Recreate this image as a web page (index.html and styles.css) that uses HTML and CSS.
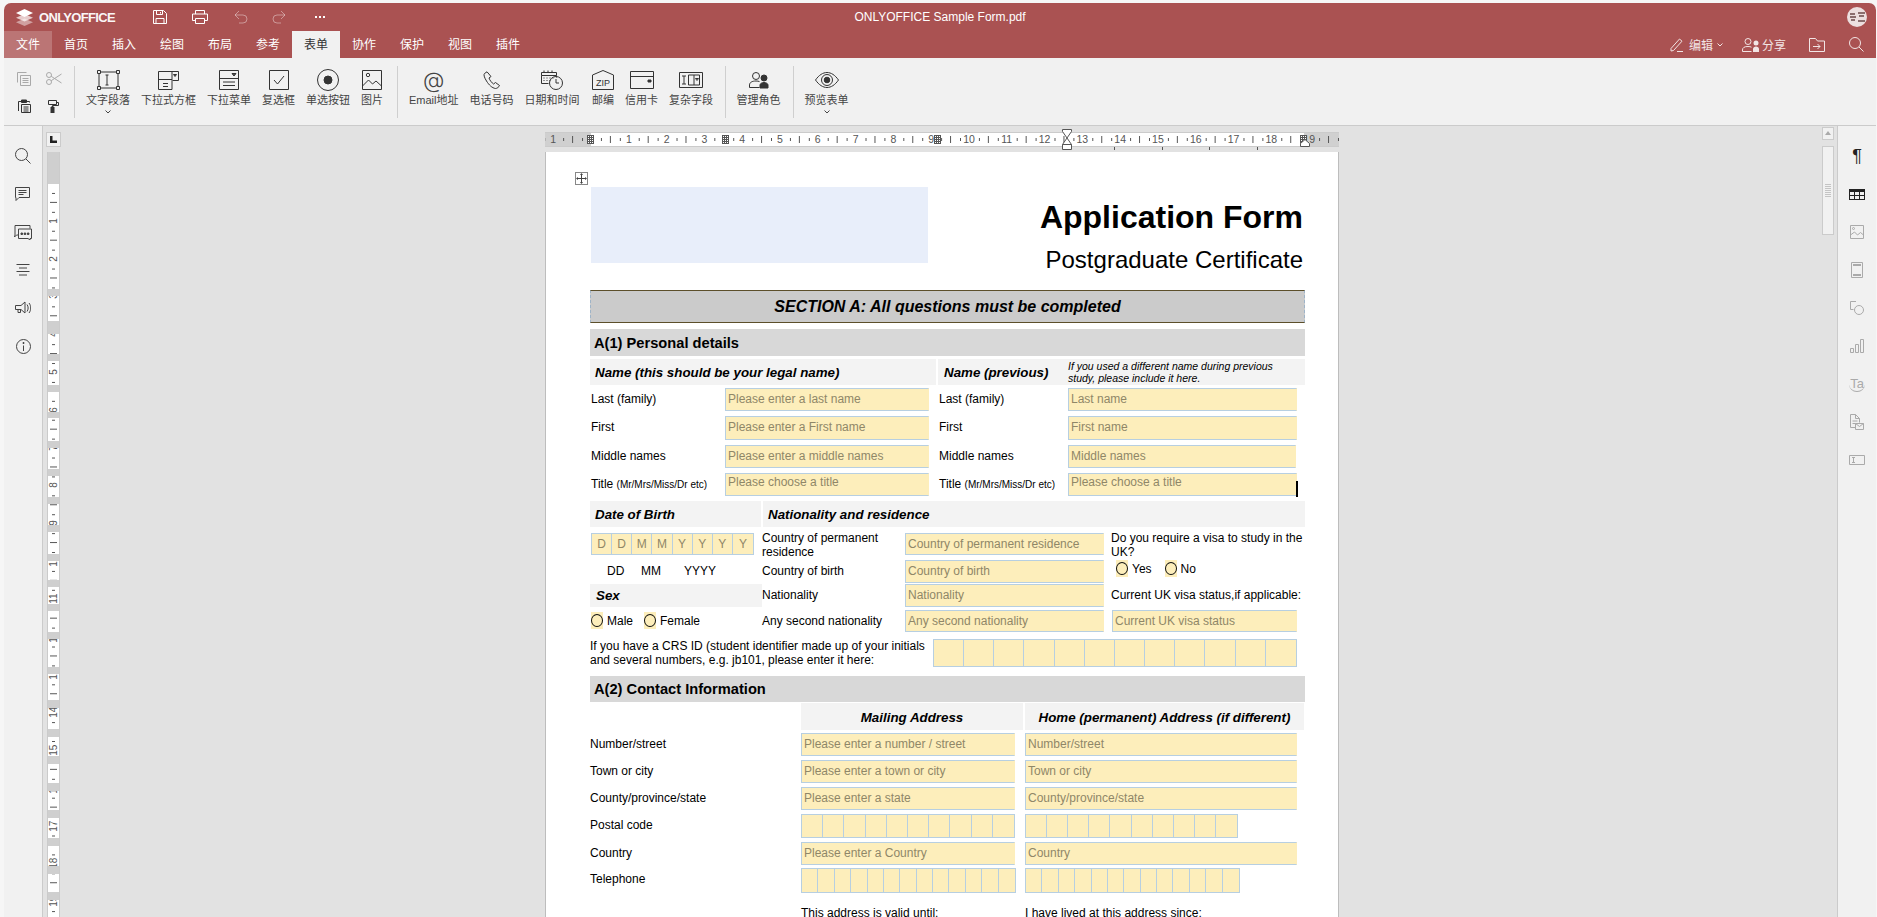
FILE: index.html
```html
<!DOCTYPE html>
<html lang="zh">
<head>
<meta charset="utf-8">
<title>ONLYOFFICE Sample Form.pdf</title>
<link rel="stylesheet" href="styles.css">
</head>
<body>
<div class="app">
  <header class="head">
    <div class="titlebar">
      <div class="tb-left">
        <svg class="logo" viewBox="0 0 17 17" width="17" height="17"><path d="M8.5 9.5 0 13.2l8.5 3.8 8.5-3.8z" fill="#fff" opacity=".45"/><path d="M8.5 5 0 8.7l8.5 3.8L17 8.7z" fill="#fff" opacity=".7"/><path d="M8.5 0 0 4l8.5 4L17 4z" fill="#fff"/></svg>
        <span class="brand">ONLYOFFICE</span>
        <svg class="tb-save" viewBox="0 0 14 14" width="14" height="14"><path class="w" d="M.5.500h10l3 3v10H.5zM3.500.5v4h6v-4M3 13.500v-5h8v5M7.500 2v1.500"/></svg>
        <svg class="tb-print" viewBox="0 0 16 14" width="16" height="14"><path class="w" d="M3.500 4V.5h9V4M3.500 10.500H.5V4h15v6.500h-3M3.500 8.500h9v5h-9z"/></svg>
        <svg class="tb-undo" viewBox="0 0 14 14" width="14" height="14"><path class="w dim" d="M5 1 1 5l4 4M1 5h8a4 4 0 0 1 0 8H5"/></svg>
        <svg class="tb-redo" viewBox="0 0 14 14" width="14" height="14"><path class="w dim" d="m9 1 4 4-4 4M13 5H5a4 4 0 0 0 0 8h4"/></svg>
        <span class="tb-dots"><i></i><i></i><i></i></span>
      </div>
      <div class="doc-title">ONLYOFFICE Sample Form.pdf</div>
      <div class="tb-right">
        <svg class="avatar" viewBox="0 0 20 20" width="20" height="20"><circle cx="10" cy="10" r="10" fill="#ecdfdf"/><path d="M3 7h5M3 10h6M4 13h4M11 6h7M11 14h7M12 9h5" stroke="#6b4a4a" stroke-width="1.300" fill="none"/></svg>
      </div>
    </div>
    <div class="tabbar">
      <span class="tab tab-file">文件</span>
      <span class="tab">首页</span>
      <span class="tab">插入</span>
      <span class="tab">绘图</span>
      <span class="tab">布局</span>
      <span class="tab">参考</span>
      <span class="tab tab-on">表单</span>
      <span class="tab">协作</span>
      <span class="tab">保护</span>
      <span class="tab">视图</span>
      <span class="tab">插件</span>
      <div class="hdr-tools">
        <svg class="ht-pencil" viewBox="0 0 14 14" width="14" height="14"><path class="w" d="M1 10.500 9.500 1 12 3.200 3.500 12.500 1 13zM7 13.500h6"/></svg>
        <span class="ht-label">编辑</span>
        <svg class="ht-chev" viewBox="0 0 6 4" width="6" height="4"><path class="w" d="m.5.500 2.500 2.500L5.500.500"/></svg>
        <svg class="ht-share" viewBox="0 0 18 14" width="18" height="14"><circle class="w" cx="6" cy="3.500" r="3"/><path class="w" d="M.5 13.500v-1.500c0-2.500 2-3.500 5.500-3.500 1.500 0 2.500.2 3.500.7M.5 13.500h9"/><circle cx="14" cy="5" r="2.500" fill="#fff"/><path d="M11 14v-3c0-1.500 1.500-2.500 3-2.500s3 1 3 2.500v3z" fill="#fff"/></svg>
        <span class="ht-label ht-tight">分享</span>
        <svg class="ht-file" viewBox="0 0 16 14" width="16" height="14"><path class="w" d="M.5.500h6l2 2.500h7v10.500H.5zM4 8.500h7M8.500 6l2.500 2.500L8.500 11"/></svg>
        <svg class="ht-search" viewBox="0 0 15 15" width="15" height="15"><circle class="w" cx="6" cy="6" r="5.500"/><path class="w" d="m10 10 4.500 4.500"/></svg>
      </div>
    </div>
  </header>

  <section class="toolbar">
    <div class="clip">
      <svg class="dim-ic" viewBox="0 0 14 14" width="14" height="14"><path d="M.5 10.500V.5h9M3.500 3.500h10v10h-10zM5.500 6.500h6M5.500 8.500h6M5.500 10.500h6"/></svg>
      <svg class="dim-ic" viewBox="0 0 16 13" width="16" height="13"><circle cx="3" cy="3" r="2.500"/><circle cx="3" cy="10" r="2.500"/><path d="M5.200 4.300 15.500 11M5.200 8.700 15.500 2"/></svg>
      <svg class="dark-ic" viewBox="0 0 14 14" width="14" height="14"><path d="M1.500 12V2.500h3M9.500 2.500h3v1M4.500 5.500h9v8h-9zM6.500 8h5M6.500 10h5M6.500 12h5"/><path d="M4.500 1h5v2.500h-5z" fill="#333"/></svg>
      <svg class="dark-ic" viewBox="0 0 14 14" width="14" height="14"><path d="M2.500 1.500h8v4h-8zM10.500 3.500h2v3h-6v2"/><path d="M5 8h3v6H5z" fill="#333"/></svg>
    </div>
    <span class="sep sep-a"></span>
    <div class="tools">
      <div class="tool"><svg class="tic" viewBox="0 0 23 20" width="23" height="20"><path d="M2 2h19v16H2zM8.500 5h3M10 5v10M8.500 15h3"/><path d="M.5.500h3v3h-3zM19.500.500h3v3h-3zM.5 16.500h3v3h-3zM19.500 16.500h3v3h-3z" fill="#f1f1f1"/></svg><span class="lbl">文字段落</span><svg class="more" viewBox="0 0 6 4" width="6" height="4"><path d="m.5.500 2.500 2.500L5.500.500"/></svg></div>
      <div class="tool"><svg class="tic" viewBox="0 0 21 20" width="21" height="20"><path d="M.5 19.500V1.500h20v9h-6M14 1.500v9M14 10.500v9H.5M.5 9.500h13.500M5 13.500h5M5 16.500h5"/><path d="m15.500 4.500 3 0-1.500 2z" fill="#555"/></svg><span class="lbl">下拉式方框</span></div>
      <div class="tool"><svg class="tic" viewBox="0 0 20 20" width="20" height="20"><path d="M.5.500h19v19H.5zM.5 8.500h19M4 12h12M4 15.500h12"/><path d="m13 3.500 4 0-2 2.500z" fill="#555"/></svg><span class="lbl">下拉菜单</span></div>
      <div class="tool"><svg class="tic" viewBox="0 0 20 20" width="20" height="20"><path d="M.5.500h19v19H.5zM5 10l3.500 4L15 6"/></svg><span class="lbl">复选框</span></div>
      <div class="tool"><svg class="tic" viewBox="0 0 22 22" width="22" height="22"><circle cx="11" cy="11" r="10.500"/><circle cx="11" cy="11" r="4" fill="#333"/></svg><span class="lbl">单选按钮</span></div>
      <div class="tool"><svg class="tic" viewBox="0 0 20 20" width="20" height="20"><path d="M.5.500h19v19H.5zM.5 16l6-6 4 4 3.500-3 5.500 5"/><circle cx="6" cy="5" r="1.700"/></svg><span class="lbl">图片</span></div>
    </div>
    <span class="sep sep-b"></span>
    <div class="tools">
      <div class="tool"><span class="at">@</span><span class="lbl">Email地址</span></div>
      <div class="tool"><svg class="tic" viewBox="0 0 18 18" width="18" height="18"><path d="M4 .8 1.500 2.500C.5 3.500 1 6 3.500 10s5.500 7 9 7.500c1.500 0 3.500-1.500 4-3l-4-3-2 1.500C9 12 6.500 9 6 7l2-1.500z"/></svg><span class="lbl">电话号码</span></div>
      <div class="tool tool-date"><svg class="tic" viewBox="0 0 22 20" width="22" height="20"><path d="M.5 2.500h15v3H.5zM.5 5.500v8h7M15.500 5.500v2M2.500 8h1M5.500 8h1M8.500 8h1M11.500 8h1M2.500 10.500h1M5.500 10.500h1M8.500 10.500h1M3 .5v2M7 .5v2M11 .5v2"/><circle cx="15" cy="13" r="6.500"/><path d="M15 9v4h3"/></svg><span class="lbl">日期和时间</span></div>
      <div class="tool"><svg class="tic" viewBox="0 0 22 20" width="22" height="20"><path d="M.5 5 11 .5 21.500 5v14.500H.5z"/><text class="ziptxt" x="11" y="15.500">ZIP</text></svg><span class="lbl">邮编</span></div>
      <div class="tool"><svg class="tic" viewBox="0 0 24 18" width="24" height="18"><path d="M.5.500h23v17H.5zM.5 5.500h23"/><path d="M18 9h3v2h-3z" fill="#333"/></svg><span class="lbl">信用卡</span></div>
      <div class="tool"><svg class="tic" viewBox="0 0 24 16" width="24" height="16"><path d="M.5.500h23v15H.5zM3 4h4M5 4v8M3 12h4M9.500 3h11v10h-11zM15 3v10M16.500 6.500h3l-1.500 2z"/></svg><span class="lbl">复杂字段</span></div>
    </div>
    <span class="sep sep-c"></span>
    <div class="tools">
      <div class="tool"><svg class="tic" viewBox="0 0 20 16" width="20" height="16"><circle cx="7" cy="4" r="3.500"/><path d="M.5 15.500V13c0-2.500 2.500-4 6.500-4 1.500 0 2.500.2 3.500.6M.5 15.500h10"/><circle cx="15" cy="6" r="3" fill="#333"/><path d="M11 16v-3c0-1.500 2-2.500 4-2.500s4 1 4 2.500v3z" fill="#333"/></svg><span class="lbl">管理角色</span></div>
    </div>
    <span class="sep sep-d"></span>
    <div class="tools">
      <div class="tool"><svg class="tic" viewBox="0 0 24 16" width="24" height="16"><path d="M.5 8C4 3 8 .5 12 .5S20 3 23.500 8C20 13 16 15.500 12 15.500S4 13 .5 8z"/><circle cx="12" cy="8" r="5.500"/><circle cx="12" cy="8" r="2.800" fill="#333"/></svg><span class="lbl">预览表单</span><svg class="more" viewBox="0 0 6 4" width="6" height="4"><path d="m.5.500 2.500 2.500L5.500.500"/></svg></div>
    </div>
  </section>

  <div class="workspace">
    <aside class="side side-left">
      <div class="side-item"><svg class="si" viewBox="0 0 16 16" width="16" height="16"><circle cx="6.500" cy="6.500" r="6"/><path d="m11 11 4.500 4.500"/></svg></div>
      <div class="side-item"><svg class="si" viewBox="0 0 16 14" width="16" height="14"><path d="M.5.500h14v10H4l-3 3v-3H.5zM3.500 3.500h8M3.500 5.500h8M3.500 7.500h5"/></svg></div>
      <div class="side-item"><svg class="si" viewBox="0 0 18 15" width="18" height="15"><path d="M1 10V.5h15v3M1 10l-.5 2 2-2H4M4.500 4h13v9.500h-1.500v1.500l-2-1.500H4.500z"/><path d="M7 8h1.500v1.500H7zM10.200 8h1.500v1.500h-1.500zM13.400 8h1.500v1.500h-1.500z" fill="#444"/></svg></div>
      <div class="side-item"><svg class="si" viewBox="0 0 14 12" width="14" height="12"><path d="M.5.500h13M3 4h8M.5 7.500h13M3 11h8"/></svg></div>
      <div class="side-item"><svg class="si" viewBox="0 0 16 14" width="16" height="14"><path d="M.5 4.500h5.500L10 1v11L6 8.500H.5zM3 8.500v3h2.500v-3M12 3.500c1.500 2 1.500 5 0 7M14 2c2.300 3 2.300 7 0 10"/></svg></div>
      <div class="side-item"><svg class="si" viewBox="0 0 15 15" width="15" height="15"><circle cx="7.500" cy="7.500" r="7"/><path d="M7.500 6.500V12"/><path d="M7 3.500h1v1H7z" fill="#444"/></svg></div>
    </aside>

    <main class="canvas">
      <div class="vcol">
        <div class="corner"><svg viewBox="0 0 7 7" width="7" height="7"><path d="M0 0h2.500v4.500H7V7H0z" fill="#222"/></svg></div>
        <div class="vruler">
          <div class="vnums">
            <span></span><span>1</span><span>2</span><span>3</span><span>4</span><span>5</span><span>6</span><span>7</span><span>8</span><span>9</span><span>10</span><span>11</span><span>12</span><span>13</span><span>14</span><span>15</span><span>16</span><span>17</span><span>18</span><span>19</span>
          </div>
        </div>
      </div>

      <div class="doc">
        <div class="hruler">
          <div class="hnums">
            <span class="g">1</span><span class="g"></span><span>1</span><span>2</span><span>3</span><span>4</span><span>5</span><span>6</span><span>7</span><span>8</span><span>9</span><span>10</span><span>11</span><span>12</span><span>13</span><span>14</span><span>15</span><span>16</span><span>17</span><span>18</span><span class="g">19</span>
          </div>
          <i class="colmark cm1"></i><i class="colmark cm2"></i><i class="colmark cm3"></i><i class="colmark cm4"></i>
          <svg class="hourglass" viewBox="0 0 10 21" width="10" height="21"><path d="M.5.500h9v2L5 9l4.500 6.500v5h-9v-5L5 9 .5 2.500zM.5 15.500h9" fill="#fff" stroke="#555"/></svg>
          <svg class="endmark" viewBox="0 0 10 8" width="10" height="8"><path d="M.5 7.500V4.500L5 .5l4.500 4v3z" fill="#fff" stroke="#555"/></svg>
          <i class="hmark hm1"></i><i class="hmark hm2"></i><i class="hmark hm3"></i><i class="hmark hm4"></i>
        </div>

        <article class="page">
          <span class="move"><svg viewBox="0 0 11 11" width="11" height="11"><path d="M5.500 1.500v8M1.500 5.500h8" fill="none" stroke="#444"/><path d="M5.500 0 7 2H4zM5.500 11 4 9h3zM0 5.500 2 4v3zM11 5.500 9 7V4z" fill="#444"/></svg></span>
          <div class="form">
            <div class="form-head">
              <div class="logo-box"></div>
              <div class="form-title">
                <h1>Application Form</h1>
                <h2>Postgraduate Certificate</h2>
              </div>
            </div>

            <div class="section-a">SECTION A: All questions must be completed</div>
            <div class="band band-a1">A(1) Personal details</div>

            <div class="name-head">
              <div class="nh nh-l"><b>Name (this should be your legal name)</b></div>
              <div class="nh nh-r"><b>Name (previous)</b><small>If you used a different name during previous study, please include it here.</small></div>
            </div>

            <div class="names">
              <span class="lab">Last (family)</span><div class="f">Please enter a last name</div><span></span><span class="lab">Last (family)</span><div class="f">Last name</div>
              <span class="lab">First</span><div class="f">Please enter a First name</div><span></span><span class="lab">First</span><div class="f">First name</div>
              <span class="lab">Middle names</span><div class="f">Please enter a middle names</div><span></span><span class="lab">Middle names</span><div class="f f-short">Middle names</div>
              <span class="lab">Title <small>(Mr/Mrs/Miss/Dr etc)</small></span><div class="f f-top">Please choose a title</div><span></span><span class="lab">Title <small>(Mr/Mrs/Miss/Dr etc)</small></span><div class="f f-top f-caret">Please choose a title</div>
            </div>

            <div class="dob-head">
              <div class="nh dh-l"><b>Date of Birth</b></div>
              <div class="nh dh-r"><b>Nationality and residence</b></div>
            </div>

            <div class="dob">
              <div class="cells cells-dob f-h22"><span>D</span><span>D</span><span>M</span><span>M</span><span>Y</span><span>Y</span><span>Y</span><span>Y</span></div>
              <span class="lab2">Country of permanent residence</span>
              <div class="f f-h22">Country of permanent residence</div>
              <span></span>
              <span class="lab2">Do you require a visa to study in the UK?</span>

              <div class="dmy"><span>DD</span><span>MM</span><span>YYYY</span></div>
              <span class="lab">Country of birth</span>
              <div class="f">Country of birth</div>
              <span></span>
              <div class="radios r-visa"><label class="radio"><i></i>Yes</label><label class="radio"><i></i>No</label></div>

              <div class="nh sex"><b>Sex</b></div>
              <span class="lab">Nationality</span>
              <div class="f">Nationality</div>
              <span></span>
              <span class="lab">Current UK visa status,if applicable:</span>

              <div class="radios r-sex"><label class="radio"><i></i>Male</label><label class="radio"><i></i>Female</label></div>
              <span class="lab">Any second nationality</span>
              <div class="f f-h22">Any second nationality</div>
              <span></span>
              <div class="f f-h22 f-visa">Current UK visa status</div>
            </div>

            <div class="crs">
              <p>If you have a CRS ID (student identifier made up of your initials and several numbers, e.g. jb101, please enter it here:</p>
              <div class="cells c12"><span></span><span></span><span></span><span></span><span></span><span></span><span></span><span></span><span></span><span></span><span></span><span></span></div>
            </div>

            <div class="band band-a2">A(2) Contact Information</div>

            <div class="contact">
              <span></span><div class="nh ch ch-l"><b>Mailing Address</b></div><div class="nh ch ch-r"><b>Home (permanent) Address (if different)</b></div>
              <span class="lab">Number/street</span><div class="f f-l">Please enter a number / street</div><div class="f f-r">Number/street</div>
              <span class="lab">Town or city</span><div class="f f-l">Please enter a town or city</div><div class="f f-r">Town or city</div>
              <span class="lab">County/province/state</span><div class="f f-l">Please enter a state</div><div class="f f-r">County/province/state</div>
              <span class="lab">Postal code</span>
              <div class="cells c10 f-l p-h"><span></span><span></span><span></span><span></span><span></span><span></span><span></span><span></span><span></span><span></span></div>
              <div class="cells c10 pr p-h"><span></span><span></span><span></span><span></span><span></span><span></span><span></span><span></span><span></span><span></span></div>
              <span class="lab">Country</span><div class="f f-l">Please enter a Country</div><div class="f f-r">Country</div>
              <span class="lab">Telephone</span>
              <div class="cells c13 tel"><span></span><span></span><span></span><span></span><span></span><span></span><span></span><span></span><span></span><span></span><span></span><span></span><span></span></div>
              <div class="cells c13 tel"><span></span><span></span><span></span><span></span><span></span><span></span><span></span><span></span><span></span><span></span><span></span><span></span><span></span></div>
              <span></span><span class="plain">This address is valid until:</span><span class="plain">I have lived at this address since:</span>
            </div>
          </div>
        </article>
      </div>

      <div class="vscroll">
        <div class="sc-up"></div>
        <div class="sc-thumb"><i></i></div>
      </div>
    </main>

    <aside class="side side-right">
      <div class="side-item"><span class="pilcrow">¶</span></div>
      <div class="side-item"><svg viewBox="0 0 16 11" width="16" height="11"><path d="M0 0h16v11H0z" fill="#222"/><path d="M1 3h4v3H1zM6 3h4v3H6zM11 3h4v3h-4zM1 7h4v3H1zM6 7h4v3H6zM11 7h4v3h-4z" fill="#f1f1f1"/></svg></div>
      <div class="side-item"><svg class="rs" viewBox="0 0 14 14" width="14" height="14"><path d="M.5.500h13v13H.5zM.5 10l4-3 3 3 3-2.500 3 2.500"/><circle cx="3.500" cy="3.500" r="1"/></svg></div>
      <div class="side-item"><svg class="rs" viewBox="0 0 12 16" width="12" height="16"><path d="M.5.500h11v15H.5z"/><path d="M2 2h8v2H2zM2 12h8v2H2z" fill="#aaa" stroke="none"/></svg></div>
      <div class="side-item"><svg class="rs" viewBox="0 0 14 14" width="14" height="14"><path d="M6 .5H.5v8h3"/><circle cx="9" cy="9" r="4.500"/></svg></div>
      <div class="side-item"><svg class="rs" viewBox="0 0 14 14" width="14" height="14"><path d="M.5 9.500h3v4h-3zM5.500 5.500h3v8h-3zM10.500.5h3v13h-3z"/></svg></div>
      <div class="side-item"><span class="ta">Ta</span></div>
      <div class="side-item"><svg class="rs" viewBox="0 0 14 16" width="14" height="16"><path d="M6 13.500H.5V.5h5l4 4v4M5.500.5v4h4M2.500 7h5M2.500 9.500h3M5.500 9.500h8v6h-8zM5.500 9.500l4 3 4-3"/></svg></div>
      <div class="side-item"><svg class="rs" viewBox="0 0 16 10" width="16" height="10"><path d="M.5.500h15v9H.5zM3 2.500h3M4.500 2.500v5M3 7.500h3"/></svg></div>
    </aside>
  </div>
</div>
</body>
</html>
```

FILE: styles.css
```css
* { box-sizing: border-box; }
html, body { margin: 0; height: 100%; overflow: hidden; }
body {
  padding: 3px 1px 0 4px;
  background: #f6f6f6;
  font-family: "Liberation Sans", "Noto Sans CJK SC", Arial, sans-serif;
  font-size: 12px;
  color: #000;
}
.app { height: 914px; display: flex; flex-direction: column; }

/* header */
.head { background: #aa5252; color: #fff; border-radius: 7px 7px 0 0; }
.titlebar {
  height: 28px;
  display: grid;
  grid-template-columns: 1fr auto 1fr;
  align-items: center;
}
.w { fill: none; stroke: #fff; stroke-width: 1; }
.w.dim { opacity: .4; }
.tb-left { display: flex; align-items: center; padding-left: 12px; }
.logo { margin-right: 6px; }
.brand { font-size: 13px; font-weight: 700; letter-spacing: -.65px; width: 77px; white-space: nowrap; opacity: .95; }
.tb-save { margin-left: 37px; }
.tb-print { margin-left: 25px; }
.tb-undo { margin-left: 26px; }
.tb-redo { margin-left: 24px; }
.tb-dots { margin-left: 29px; display: flex; gap: 2px; }
.tb-dots i { width: 2px; height: 2px; background: #fff; }
.doc-title { font-size: 12px; white-space: nowrap; }
.tb-right { display: flex; justify-content: flex-end; padding-right: 9px; }
.avatar { display: block; }

.tabbar { height: 27px; display: flex; align-items: stretch; }
.tab {
  width: 48px;
  display: flex;
  align-items: center;
  justify-content: center;
  font-size: 12px;
  padding-bottom: 2px;
}
.tab-file { background: #bb7575; }
.tab-on { background: #f1f1f1; color: #333; }
.hdr-tools {
  margin-left: auto;
  padding-right: 12px;
  display: flex;
  align-items: center;
  opacity: .85;
}
.ht-label { margin-left: 5px; font-size: 12px; }
.ht-tight { margin-left: 2px; }
.ht-chev { margin-left: 4px; }
.ht-share { margin-left: 19px; }
.ht-file { margin-left: 23px; }
.ht-search { margin-left: 24px; }

/* toolbar */
.toolbar {
  height: 68px;
  flex: none;
  background: #f1f1f1;
  border-bottom: 1px solid #cbcbcb;
  padding-top: 8px;
  display: flex;
  align-items: flex-start;
}
.clip {
  margin-left: 13px;
  width: 45px;
  display: grid;
  grid-template-columns: 29px 16px;
  grid-template-rows: 14px 14px;
  row-gap: 13px;
  padding-top: 6px;
}
.dim-ic { fill: none; stroke: #a9a9a9; }
.dark-ic { fill: none; stroke: #333; }
.sep { width: 1px; height: 52px; background: #cfcfcf; flex: none; }
.sep-a { margin: 0 11px 0 12px; }
.sep-b { margin: 0 11px 0 14px; }
.sep-c { margin: 0 11px 0 11.500px; }
.sep-d { margin: 0 11px 0 12px; }
.tools { display: flex; gap: 11px; }
.tool {
  display: flex;
  flex-direction: column;
  align-items: center;
  padding-top: 2px;
}
.tool-date { margin-right: 1.500px; }
.tic { height: 24px; fill: none; stroke: #333; flex: none; }
.at { height: 24px; font-family: "Inter", "Liberation Sans", sans-serif; font-weight: 300; font-size: 22px; line-height: 24px; color: #444; }
.ziptxt { font-size: 9px; text-anchor: middle; fill: #333; stroke: none; font-family: "Liberation Sans", sans-serif; }
.lbl { margin-top: 1px; font-size: 11px; line-height: 14px; color: #444; white-space: nowrap; }
.more { margin-top: 3px; fill: none; stroke: #444; }

/* workspace */
.workspace { flex: 1; min-height: 0; display: flex; }
.side { width: 39px; flex: none; background: #f1f1f1; padding-top: 11px; }
.side-left { border-right: 1px solid #cbcbcb; }
.side-right { border-left: 1px solid #cbcbcb; }
.side-item { height: 38px; display: flex; align-items: center; justify-content: center; }
.si { fill: none; stroke: #444; }
.rs { fill: none; stroke: #aaa; }
.pilcrow { font-size: 18px; font-weight: 400; color: #222; line-height: 20px; }
.ta { font-size: 13px; color: #aaa; border-bottom: 1px solid #aaa; border-radius: 0 0 50% 50%; line-height: 14px; padding: 0 1px; }

.canvas { flex: 1; min-width: 0; display: flex; background: #e2e2e2; overflow: hidden; }
.vcol { width: 18px; flex: none; margin-left: 3px; padding-top: 6px; }
.corner {
  width: 15px;
  height: 15px;
  border: 1px solid #cbcbcb;
  background: #f1f1f1;
  display: flex;
  align-items: center;
  justify-content: center;
}
.vruler {
  position: relative;
  margin: 5px 0 0 1px;
  width: 13px;
  height: 765px;
  overflow: hidden;
  border-left: 1px solid #cbcbcb;
  border-right: 1px solid #cbcbcb;
  background:
    linear-gradient(transparent 9.45px, #555 9.45px 10.45px, transparent 10.45px 28.35px, #555 28.35px 29.35px, transparent 29.35px) center 31px / 3px 37.8px repeat-y,
    linear-gradient(#555 1px, transparent 1px) center 12.1px / 7px 37.8px repeat-y,
    #fff;
}
.vruler::after {
  content: "";
  position: absolute;
  inset: 0;
  background: linear-gradient(#cfcfcf 0 32px, transparent 32px 137px, #cfcfcf 137px 144px, transparent 144px 169px, #cfcfcf 169px 182px, transparent 182px 202px, #cfcfcf 202px 209px, transparent 209px 233px, #cfcfcf 233px 240px, transparent 240px 260px, #cfcfcf 260px 266px, transparent 266px 289px, #cfcfcf 289px 296px, transparent 296px 317px, #cfcfcf 317px 324px, transparent 324px 345px, #cfcfcf 345px 352px, transparent 352px 373px, #cfcfcf 373px 380px, transparent 380px 402px, #cfcfcf 402px 409px, transparent 409px 428px, #cfcfcf 428px 435px, transparent 435px 452px, #cfcfcf 452px 459px, transparent 459px 480px, #cfcfcf 480px 487px, transparent 487px 515px, #cfcfcf 515px 522px, transparent 522px 548px, #cfcfcf 548px 556px, transparent 556px 577px, #cfcfcf 577px 585px, transparent 585px 604px, #cfcfcf 604px 612px, transparent 612px 631px, #cfcfcf 631px 639px, transparent 639px 658px, #cfcfcf 658px 666px, transparent 666px 686px, #cfcfcf 686px 694px, transparent 694px 714px, #cfcfcf 714px 722px, transparent 722px 740px, #cfcfcf 740px 748px, transparent 748px);
}
.vnums { margin-top: 12px; display: flex; flex-direction: column; }
.vnums span {
  height: 37.8px;
  flex: none;
  display: flex;
  align-items: center;
  justify-content: center;
  writing-mode: vertical-rl;
  transform: rotate(180deg);
  font-size: 10px;
  color: #555;
}

.doc { flex: 1; min-width: 0; display: flex; flex-direction: column; align-items: center; padding: 6px 2px 0 0; }
.hruler {
  position: relative;
  width: 794px;
  height: 15px;
  flex: none;
  border-top: 1px solid #cbcbcb;
  border-bottom: 1px solid #cbcbcb;
  background:
    linear-gradient(90deg, transparent 9.45px, #555 9.45px 10.45px, transparent 10.45px 28.35px, #555 28.35px 29.35px, transparent 29.35px) 8.2px center / 37.8px 3px repeat-x,
    linear-gradient(90deg, #555 1px, transparent 1px) 27.1px center / 37.8px 7px repeat-x,
    linear-gradient(90deg, #d0d0d0 46px, #fff 46px 759px, #d0d0d0 759px);
}
.hnums { display: flex; margin-left: -10.7px; height: 13px; }
.hnums span {
  width: 37.8px;
  flex: none;
  display: flex;
  align-items: center;
  justify-content: center;
  font-size: 10.5px;
  color: #555;
  line-height: 13px;
}
.colmark {
  position: absolute;
  top: 2px;
  width: 7px;
  height: 9px;
  background:
    repeating-linear-gradient(90deg, #555 0 1px, transparent 1px 2px),
    repeating-linear-gradient(#555 0 1px, transparent 1px 2px);
  background-color: #fff;
}
.cm1 { left: 42px; }
.cm2 { left: 177px; }
.cm3 { left: 389px; }
.cm4 { left: 755px; }
.hourglass { position: absolute; left: 517px; top: -4px; }
.endmark { position: absolute; left: 755px; top: 6px; }
.hmark { position: absolute; top: 14px; width: 1px; height: 3px; background: #555; }
.hm1 { left: 569px; }
.hm2 { left: 617px; }
.hm3 { left: 664px; }
.hm4 { left: 712px; }

.page {
  position: relative;
  width: 794px;
  margin-top: 5px;
  flex: 1;
  background: #fff;
  border-left: 1px solid #bdbdbd;
  border-right: 1px solid #bdbdbd;
  padding: 35px 0 0 44px;
  overflow: hidden;
}
.move {
  position: absolute;
  left: 29px;
  top: 20px;
  width: 13px;
  height: 13px;
  border: 1px solid #888;
  display: flex;
  align-items: center;
  justify-content: center;
  background: #fff;
}
.form { width: 715px; }
.form-head { height: 76px; display: flex; justify-content: space-between; padding-left: 1px; }
.logo-box { width: 337px; height: 76px; background: #e8eefa; }
.form-title { padding-right: 2px; text-align: right; white-space: nowrap; }
.form-title h1 { margin: 12px 0 0; font-size: 32px; line-height: 36px; font-weight: 700; }
.form-title h2 { margin: 11px 0 0; font-size: 24px; line-height: 28px; font-weight: 400; }

.section-a {
  margin-top: 27px;
  height: 33px;
  background: #cbcbcb;
  border-top: 1px solid #5c4f2a;
  border-bottom: 1px solid #5c4f2a;
  border-left: 1px dashed #9fb4c8;
  border-right: 1px dashed #9fb4c8;
  text-align: center;
  font-weight: 700;
  font-style: italic;
  font-size: 16px;
  line-height: 31px;
}
.band {
  height: 27px;
  background: #d8d8d8;
  font-weight: 700;
  font-size: 14.67px;
  line-height: 28px;
  padding-left: 4px;
}
.band-a1 { margin-top: 6px; }
.band-a2 { margin-top: 10px; height: 26px; line-height: 26px; }
.nh {
  background: #f3f3f3;
  display: flex;
  align-items: center;
  font-style: italic;
  font-size: 13.33px;
}
.name-head { margin-top: 3px; height: 26px; display: flex; gap: 2px; }
.nh-l { width: 346px; padding-left: 5px; }
.nh-r { flex: 1; padding-left: 6px; }
.nh-r b { width: 124px; flex: none; }
.nh-r small { font-size: 10.5px; line-height: 12px; width: 225px; }

.names {
  margin-top: 3px;
  display: grid;
  grid-template-columns: 135px 204px 9px 130px 229px;
  grid-template-rows: 23px 24px 23px 23px;
  row-gap: 5px;
}
.lab { padding-left: 1px; line-height: 23px; white-space: nowrap; }
.lab small { font-size: 10px; }
.f {
  position: relative;
  background: #fdeebb;
  border: 1px solid #b7cfe1;
  border-right-color: #fdeebb;
  color: #8f8768;
  line-height: 21px;
  padding-left: 2px;
  white-space: nowrap;
  overflow: visible;
}
.f-short { margin-right: 1px; }
.f-top { line-height: 17px; }
.f-caret::after {
  content: "";
  position: absolute;
  right: -2px;
  top: 7px;
  width: 2px;
  height: 16px;
  background: #000;
}

.dob-head { margin-top: 5px; height: 26px; display: flex; gap: 2px; }
.dh-l { width: 171px; padding-left: 5px; }
.dh-r { flex: 1; padding-left: 5px; }

.dob {
  margin-top: 6px;
  display: grid;
  grid-template-columns: 172px 143px 199px 7px 194px;
  grid-template-rows: 27px 24px 26px 22px;
}
.lab2 { line-height: 14px; margin-top: -2px; }
.dob .lab { padding-left: 0; }
.dob .f { height: 23px; }
.dob .f-h22, .f-h22 { height: 22px; line-height: 20px; }
.cells {
  display: grid;
  background: #fdeebb;
  border: 1px solid #b7cfe1;
  color: #8f8768;
}
.cells span {
  border-right: 1px solid #b7cfe1;
  display: flex;
  align-items: center;
  justify-content: center;
}
.cells span:last-child { border-right: 0; }
.cells-dob { grid-template-columns: repeat(8, 1fr); width: 163px; margin-left: 1px; }
.dmy { display: flex; padding: 0 0 0 17px; line-height: 23px; }
.dmy span:nth-child(1) { width: 34px; }
.dmy span:nth-child(2) { width: 43px; }
.sex { height: 23px; padding-left: 6px; }
.radios { display: flex; align-items: flex-start; }
.radio { display: flex; align-items: center; height: 17px; }
.radio i {
  width: 12px;
  height: 17px;
  background: #fdeebb;
  display: flex;
  align-items: center;
  justify-content: center;
  margin-right: 4px;
}
.radio i::before { content: ""; width: 10px; height: 11px; border: 1px solid #111; border-radius: 50%; }
.r-visa { padding-left: 5px; gap: 13px; }
.r-sex { padding: 2px 0 0 1px; gap: 11px; }
.f-visa { margin-left: 1px; width: 185px; }

.crs { margin-top: 7px; display: grid; grid-template-columns: 343px 364px; height: 27px; }
.crs p { margin: 0; line-height: 14px; width: 340px; padding-top: 0; }
.c12 { grid-template-columns: repeat(12, 1fr); }

.contact {
  margin-top: 1px;
  display: grid;
  grid-template-columns: 211px 224px 280px;
  grid-template-rows: 30px 27px 27px 27px 28px 26px 38px 14px;
}
.contact .lab { padding-left: 0; line-height: 23px; }
.ch { height: 27px; justify-content: center; padding-top: 1px; }
.ch-l { width: 222px; }
.ch-r { width: 279px; }
.f-l { width: 214px; height: 23px; }
.f-r { width: 272px; height: 23px; }
.c10 { grid-template-columns: repeat(10, 1fr); }
.p-h { height: 24px; }
.pr { width: 213px; }
.c13 { grid-template-columns: repeat(13, 1fr); }
.tel { width: 215px; height: 25px; }
.plain { line-height: 14px; white-space: nowrap; }

.vscroll { width: 12px; flex: none; margin-right: 3px; padding-top: 1px; }
.sc-up {
  height: 13px;
  border: 1px solid #cbcbcb;
  background: #f1f1f1;
  position: relative;
}
.sc-up::before {
  content: "";
  position: absolute;
  left: 2px;
  top: 3px;
  border: 3.500px solid transparent;
  border-top: 0;
  border-bottom: 4px solid #aaa;
}
.sc-thumb {
  margin-top: 6px;
  height: 89px;
  border: 1px solid #cbcbcb;
  background: #f1f1f1;
  padding-top: 37px;
}
.sc-thumb i {
  display: block;
  margin: 0 auto;
  width: 6px;
  height: 13px;
  background: repeating-linear-gradient(#c4c4c4 0 1px, transparent 1px 2px);
}
```
